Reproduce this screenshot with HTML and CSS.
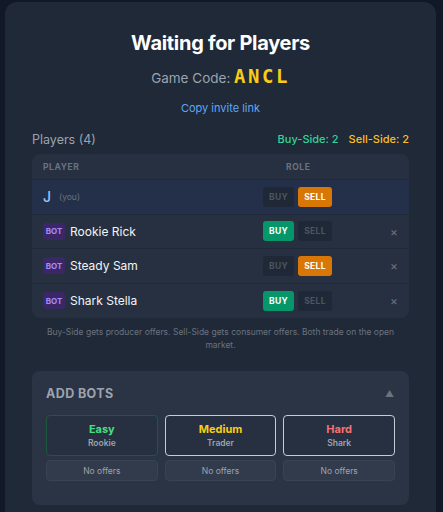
FILE: index.html
```html
<!DOCTYPE html>
<html>
<head>
<meta charset="utf-8">
<link rel="stylesheet" href="styles.css">
</head>
<body>
<div class="card">
  <h1 class="title">Waiting for Players</h1>
  <div class="code">Game Code: <span class="code-val">ANCL</span></div>
  <div class="copy"><a class="copy-link">Copy invite link</a></div>

  <div class="players-head">
    <span class="players-count">Players (4)</span>
    <span class="sides"><span class="buy-side">Buy-Side: 2</span><span class="sell-side">Sell-Side: 2</span></span>
  </div>

  <div class="table">
    <div class="row head">
      <div class="c-player">PLAYER</div>
      <div class="c-role">ROLE</div>
      <div class="c-x"></div>
    </div>
    <div class="row me">
      <div class="c-player"><span class="me-name">J</span><span class="you">(you)</span></div>
      <div class="c-role"><span class="btn off">BUY</span><span class="btn sell">SELL</span></div>
      <div class="c-x"></div>
    </div>
    <div class="row">
      <div class="c-player"><span class="bot">BOT</span><span class="name">Rookie Rick</span></div>
      <div class="c-role"><span class="btn buy">BUY</span><span class="btn off">SELL</span></div>
      <div class="c-x">×</div>
    </div>
    <div class="row">
      <div class="c-player"><span class="bot">BOT</span><span class="name">Steady Sam</span></div>
      <div class="c-role"><span class="btn off">BUY</span><span class="btn sell">SELL</span></div>
      <div class="c-x">×</div>
    </div>
    <div class="row last">
      <div class="c-player"><span class="bot">BOT</span><span class="name">Shark Stella</span></div>
      <div class="c-role"><span class="btn buy">BUY</span><span class="btn off">SELL</span></div>
      <div class="c-x">×</div>
    </div>
  </div>

  <p class="note">Buy-Side gets producer offers. Sell-Side gets consumer offers. Both trade on the open market.</p>

  <div class="addbots">
    <div class="ab-head">
      <span class="ab-title">ADD BOTS</span>
      <span class="ab-toggle">▲</span>
    </div>
    <div class="ab-grid">
      <div class="ab-col">
        <div class="lvl easy"><div class="lvl-name">Easy</div><div class="lvl-sub">Rookie</div></div>
        <div class="offers">No offers</div>
      </div>
      <div class="ab-col">
        <div class="lvl medium"><div class="lvl-name">Medium</div><div class="lvl-sub">Trader</div></div>
        <div class="offers">No offers</div>
      </div>
      <div class="ab-col">
        <div class="lvl hard"><div class="lvl-name">Hard</div><div class="lvl-sub">Shark</div></div>
        <div class="offers">No offers</div>
      </div>
    </div>
  </div>
</div>
</body>
</html>
```

FILE: styles.css
```css
* { box-sizing: border-box; }
html, body { margin: 0; padding: 0; }
body {
  background: #111827;
  font-family: Inter, "Noto Sans", sans-serif;
  color: #f3f4f6;
  width: 443px;
  height: 512px;
  overflow: hidden;
}
.card {
  margin: 2px 0 0 5px;
  width: 431px;
  height: 510px;
  overflow: hidden;
  background: #1f2937;
  border-radius: 12px 12px 0 0;
  padding: 29px 27px 0 27px;
}
.title {
  margin: 0;
  text-align: center;
  font-size: 20px;
  font-weight: 700;
  line-height: 24px;
  color: #ffffff;
  letter-spacing: -0.3px;
}
.code {
  margin-top: 10px;
  text-align: center;
  font-size: 13.5px;
  line-height: 22px;
  color: #9ca3af;
}
.code-val {
  font-family: "DejaVu Sans Mono", "Liberation Mono", monospace;
  font-weight: 700;
  font-size: 19px;
  color: #facc15;
  letter-spacing: 2.5px;
}
.copy {
  margin-top: 12px;
  text-align: center;
  font-size: 11px;
  line-height: 14px;
}
.copy-link { color: #60a5fa; }
.players-head {
  margin-top: 15px;
  display: flex;
  justify-content: space-between;
  align-items: center;
  height: 18px;
}
.players-count { font-size: 12.5px; color: #9ca3af; }
.sides { font-size: 11px; font-weight: 500; display: flex; gap: 10px; }
.buy-side { color: #34d399; }
.sell-side { color: #fbbf24; }
.table {
  margin-top: 6px;
  background: #263040;
  border-radius: 8px;
  overflow: hidden;
}
.row {
  display: flex;
  align-items: center;
  height: 34.5px;
  border-bottom: 1px solid #1f2937;
  padding-left: 11px;
}
.row.last { border-bottom: none; }
.row.head { height: 26px; }
.row.me { background: #243049; }
.head .c-player, .head .c-role {
  font-size: 8.5px;
  font-weight: 700;
  letter-spacing: 0.6px;
  color: #6b7280;
}
.c-player { flex: 1; display: flex; align-items: center; }
.c-role { width: 118px; display: flex; gap: 4px; }
.head .c-role { padding-left: 23px; }
.c-x { width: 28px; color: #6b7280; font-size: 12px; text-align: left; padding-left: 9px; }
.me-name { color: #93c5fd; font-size: 14px; font-weight: 500; }
.you { color: #6b7280; font-size: 8.5px; margin-left: 8px; }
.bot {
  background: #3b2766;
  color: #a78bfa;
  font-size: 8px;
  font-weight: 700;
  border-radius: 3px;
  width: 22px;
  height: 17px;
  display: inline-flex;
  align-items: center;
  justify-content: center;
}
.name { color: #f3f4f6; font-size: 12px; margin-left: 5px; }
.btn {
  display: inline-flex;
  align-items: center;
  justify-content: center;
  height: 20px;
  border-radius: 3px;
  font-size: 8.5px;
  font-weight: 700;
  letter-spacing: 0.3px;
  width: 31px;
}
.btn + .btn { width: 34px; }
.btn.off { background: #1f2837; color: #4b5563; }
.btn.sell { background: #d97706; color: #ffffff; }
.btn.buy { background: #059669; color: #ffffff; }
.note {
  margin: 8px 10px 0;
  text-align: center;
  font-size: 8.5px;
  line-height: 13px;
  color: #6b7280;
}
.addbots {
  margin-top: 19px;
  background: #2b3444;
  border-radius: 8px;
  padding: 14px 14px 24px;
}
.ab-head {
  display: flex;
  justify-content: space-between;
  align-items: center;
  height: 16px;
}
.ab-title { font-size: 12.5px; font-weight: 700; color: #9ca3af; letter-spacing: 0.4px; }
.ab-toggle { color: #6b7280; font-size: 9px; margin-right: 1px; }
.ab-grid {
  margin-top: 14px;
  display: grid;
  grid-template-columns: 1fr 1fr 1fr;
  gap: 7px;
}
.ab-col { display: flex; flex-direction: column; gap: 4px; }
.lvl {
  height: 41px;
  border-radius: 4px;
  border: 1px solid #9ca3af;
  display: flex;
  flex-direction: column;
  align-items: center;
  justify-content: center;
  background: #263040;
}
.lvl.medium, .lvl.hard { border: 1.5px solid #c7ccd4; }
.lvl.easy { border-color: #1d5a3c; }
.lvl-name { font-size: 11px; font-weight: 700; line-height: 14px; }
.lvl-sub { font-size: 8.5px; font-weight: 600; color: #9ca3af; line-height: 13px; margin-top: 1px; }
.easy .lvl-name { color: #4ade80; }
.medium .lvl-name { color: #facc15; }
.hard .lvl-name { color: #f87171; }
.offers {
  height: 21px;
  border-radius: 4px;
  background: #323b4b;
  border: 1px solid #3a4354;
  color: #9ca3af;
  font-size: 8.5px;
  display: flex;
  align-items: center;
  justify-content: center;
}
```
